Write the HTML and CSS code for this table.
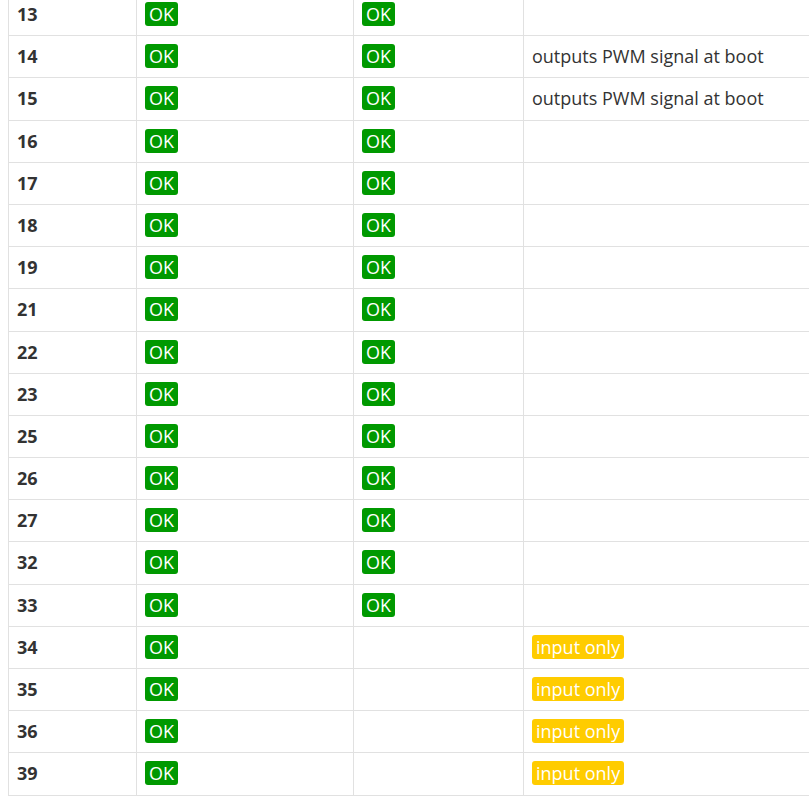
FILE: index.html
```html
<!DOCTYPE html>
<html>
<head>
<meta charset="utf-8">
<link rel="stylesheet" href="styles.css">
</head>
<body>
<div class="frame">
<table class="pins">
<colgroup><col class="c1"><col class="c2"><col class="c3"><col class="c4"></colgroup>
<tbody>
<tr><td class="gpio">13</td><td><span class="ok">OK</span></td><td><span class="ok">OK</span></td><td></td></tr>
<tr><td class="gpio">14</td><td><span class="ok">OK</span></td><td><span class="ok">OK</span></td><td>outputs PWM signal at boot</td></tr>
<tr><td class="gpio">15</td><td><span class="ok">OK</span></td><td><span class="ok">OK</span></td><td>outputs PWM signal at boot</td></tr>
<tr><td class="gpio">16</td><td><span class="ok">OK</span></td><td><span class="ok">OK</span></td><td></td></tr>
<tr><td class="gpio">17</td><td><span class="ok">OK</span></td><td><span class="ok">OK</span></td><td></td></tr>
<tr><td class="gpio">18</td><td><span class="ok">OK</span></td><td><span class="ok">OK</span></td><td></td></tr>
<tr><td class="gpio">19</td><td><span class="ok">OK</span></td><td><span class="ok">OK</span></td><td></td></tr>
<tr><td class="gpio">21</td><td><span class="ok">OK</span></td><td><span class="ok">OK</span></td><td></td></tr>
<tr><td class="gpio">22</td><td><span class="ok">OK</span></td><td><span class="ok">OK</span></td><td></td></tr>
<tr><td class="gpio">23</td><td><span class="ok">OK</span></td><td><span class="ok">OK</span></td><td></td></tr>
<tr><td class="gpio">25</td><td><span class="ok">OK</span></td><td><span class="ok">OK</span></td><td></td></tr>
<tr><td class="gpio">26</td><td><span class="ok">OK</span></td><td><span class="ok">OK</span></td><td></td></tr>
<tr><td class="gpio">27</td><td><span class="ok">OK</span></td><td><span class="ok">OK</span></td><td></td></tr>
<tr><td class="gpio">32</td><td><span class="ok">OK</span></td><td><span class="ok">OK</span></td><td></td></tr>
<tr><td class="gpio">33</td><td><span class="ok">OK</span></td><td><span class="ok">OK</span></td><td></td></tr>
<tr><td class="gpio">34</td><td><span class="ok">OK</span></td><td></td><td><span class="warn">input only</span></td></tr>
<tr><td class="gpio">35</td><td><span class="ok">OK</span></td><td></td><td><span class="warn">input only</span></td></tr>
<tr><td class="gpio">36</td><td><span class="ok">OK</span></td><td></td><td><span class="warn">input only</span></td></tr>
<tr><td class="gpio">39</td><td><span class="ok">OK</span></td><td></td><td><span class="warn">input only</span></td></tr>
</tbody>
</table>
</div>
</body>
</html>
```
FILE: styles.css
```css
html, body {
  margin: 0;
  padding: 0;
  background: #fff;
}
body {
  font-family: "Open Sans", "Liberation Sans", sans-serif;
  font-size: 18px;
  color: #333;
}
.frame {
  width: 809px;
  height: 797px;
  overflow: hidden;
  padding-left: 8px;
  box-sizing: border-box;
}
.pins {
  border-collapse: collapse;
  table-layout: fixed;
  width: 900px;
  margin-top: -7px;
}
.c1 { width: 128px; }
.c2 { width: 217px; }
.c3 { width: 170px; }
.c4 { width: 385px; }
.pins td {
  border: 1px solid #e1e1e1;
  padding: 8px 8px;
  line-height: 1.4;
  height: 25.2px;
  vertical-align: top;
  white-space: nowrap;
}
.gpio {
  font-weight: 700;
}
.ok, .warn {
  color: #fff;
  border-radius: 3px;
  padding: 0 4px;
}
.ok { background: #009900; }
.warn { background: #ffcc00; }
```
